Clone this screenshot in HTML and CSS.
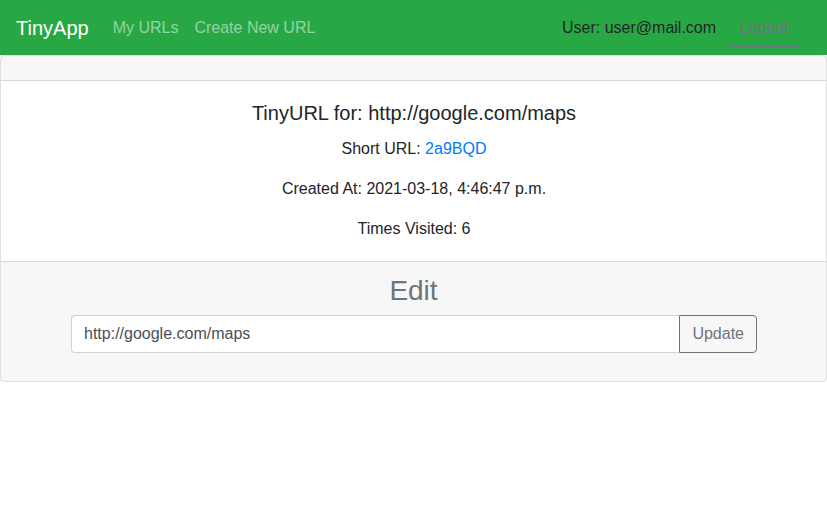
FILE: index.html
```html
<!DOCTYPE html>
<html lang="en">
<head>
<meta charset="utf-8">
<title>TinyApp</title>
<link rel="stylesheet" href="styles.css">
</head>
<body>
<nav class="navbar">
  <a class="brand" href="#">TinyApp</a>
  <div class="nav-links">
    <a class="nav-link" href="#">My URLs</a>
    <a class="nav-link" href="#">Create New URL</a>
  </div>
  <div class="nav-user">
    <span class="user-text">User: user@mail.com</span>
    <button class="btn btn-outline logout">Logout</button>
  </div>
</nav>
<main class="card">
  <div class="card-header"></div>
  <div class="card-body">
    <h5 class="card-title">TinyURL for: http://google.com/maps</h5>
    <p class="card-text">Short URL: <a class="link" href="#">2a9BQD</a></p>
    <p class="card-text">Created At: 2021-03-18, 4:46:47 p.m.</p>
    <p class="card-text">Times Visited: 6</p>
  </div>
  <div class="card-footer">
    <h3 class="edit-title">Edit</h3>
    <form class="edit-form">
      <div class="input-group">
        <input class="form-control" type="text" value="http://google.com/maps">
        <button class="btn btn-outline update" type="button">Update</button>
      </div>
    </form>
  </div>
</main>
</body>
</html>
```
FILE: styles.css
```css
* { box-sizing: border-box; }
html, body { margin: 0; }
body {
  font-family: "Liberation Sans", Arial, sans-serif;
  font-size: 16px;
  line-height: 1.5;
  color: #212529;
  background: #fff;
}
a { text-decoration: none; }

.navbar {
  display: flex;
  align-items: center;
  height: 55px;
  padding: 0 16px;
  background: #28a745;
}
.brand {
  font-size: 20px;
  line-height: 30px;
  color: #fff;
  margin-right: 16px;
}
.nav-links { display: flex; }
.nav-link {
  color: rgba(255, 255, 255, 0.5);
  padding: 8px;
}
.nav-user {
  margin-left: auto;
  display: flex;
  align-items: center;
}
.user-text {
  color: #212529;
  margin-right: 11px;
}
.btn {
  font-family: inherit;
  font-size: 16px;
  line-height: 24px;
  padding: 6px 12px;
  border-radius: 4px;
  background: transparent;
  cursor: pointer;
}
.btn-outline {
  color: #6c757d;
  border: 1px solid #6c757d;
}
.logout { margin-right: 9px; }

.card {
  display: flex;
  flex-direction: column;
  border: 1px solid rgba(0, 0, 0, 0.125);
  border-radius: 4px;
}
.card-header {
  height: 25px;
  background: rgba(0, 0, 0, 0.03);
  border-bottom: 1px solid rgba(0, 0, 0, 0.125);
}
.card-body {
  padding: 20px 20px 20px 21px;
  text-align: center;
}
.card-title {
  margin: 0 0 12px;
  font-size: 20px;
  line-height: 24px;
  font-weight: normal;
}
.card-text { margin: 0 0 16px; }
.card-text:last-child { margin-bottom: 0; }
.link { color: #007bff; }

.card-footer {
  padding: 12px 20px;
  background: rgba(0, 0, 0, 0.03);
  border-top: 1px solid rgba(0, 0, 0, 0.125);
  text-align: center;
}
.edit-title {
  margin: 0 0 8px;
  font-size: 28px;
  line-height: 33px;
  font-weight: normal;
  color: #6c757d;
}
.edit-form { margin: 0 0 16px; display: flex; justify-content: center; }
.input-group {
  display: flex;
  width: 686px;
  margin-left: 1px;
}
.form-control {
  flex: 1;
  font-family: inherit;
  font-size: 16px;
  line-height: 24px;
  height: 38px;
  padding: 6px 12px;
  color: #495057;
  background: #fff;
  border: 1px solid #ced4da;
  border-radius: 4px 0 0 4px;
  border-right: 0;
  outline: none;
}
.update {
  height: 38px;
  border-radius: 0 4px 4px 0;
}
```
